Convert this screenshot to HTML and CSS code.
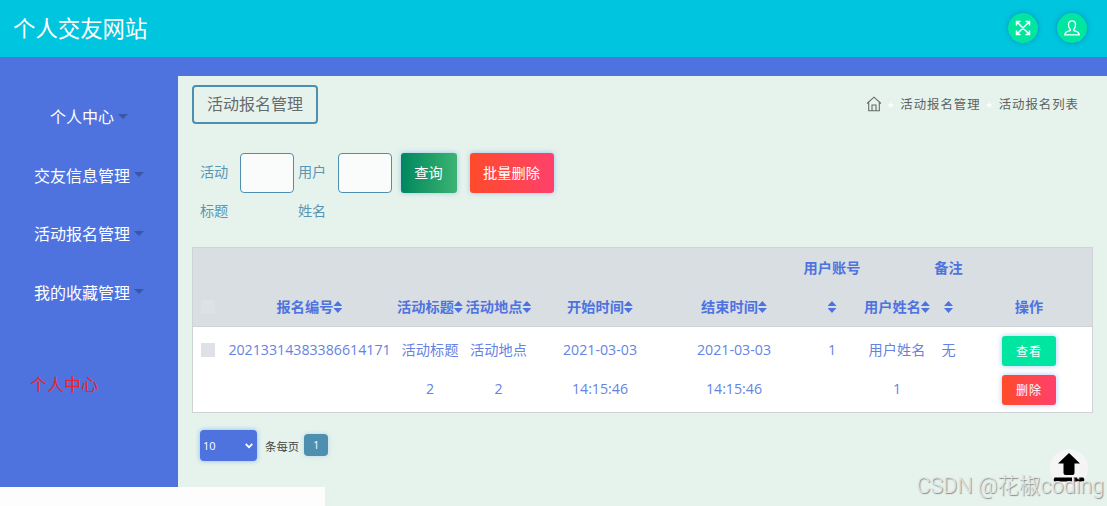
FILE: index.html
```
<!DOCTYPE html>
<html lang="zh-CN">
<head>
  <meta charset="UTF-8">
  <meta name="viewport" content="width=device-width, initial-scale=1.0">
  <title>个人交友网站</title>
  <link rel="stylesheet" href="styles.css">
</head>
<body>
  <header class="header">
    <h1 class="logo">个人交友网站</h1>
    <div class="header-btns">
      <a class="round-btn">
        <svg width="16" height="16" viewBox="0 0 16 16" fill="none" stroke="#fff" stroke-width="1.5">
          <path d="M1.5 5.5v-4h4M10.5 1.5h4v4M14.5 10.5v4h-4M5.5 14.5h-4v-4M2 2l12 12M14 2L2 14"/>
        </svg>
      </a>
      <a class="round-btn">
        <svg width="16" height="16" viewBox="0 0 16 16" fill="none" stroke="#fff" stroke-width="1.3">
          <path d="M6.3 9.600C5 8.200 4.500 6.500 4.500 4.500C4.500 2.200 6 .8 8 .8s3.500 1.400 3.500 3.700c0 2-.5 3.700-1.800 5.100v1c2 .7 5.500 1 5.500 4.300H.8c0-3.300 3.500-3.600 5.500-4.300z"/>
        </svg>
      </a>
    </div>
  </header>

  <div class="wrapper">
    <nav class="sidebar">
      <ul class="menu">
        <li><a>个人中心<i class="caret"></i></a></li>
        <li><a>交友信息管理<i class="caret"></i></a></li>
        <li><a>活动报名管理<i class="caret"></i></a></li>
        <li><a>我的收藏管理<i class="caret"></i></a></li>
      </ul>
      <a class="menu-link">个人中心</a>
    </nav>

    <main class="content">
      <div class="title-row">
        <h2 class="page-title">活动报名管理</h2>
        <div class="breadcrumb">
          <svg width="16" height="16" viewBox="0 0 16 16" fill="none" stroke="#666b6b" stroke-width="1.1">
            <path d="M1 7.500L8 1.200l7 6.300M2.700 6.200v8.600h10.600V6.200M6 14.800V9h4v5.800"/>
          </svg>
          <span class="star">★</span>
          <span>活动报名管理</span>
          <span class="star">★</span>
          <span>活动报名列表</span>
        </div>
      </div>

      <form class="search">
        <label>活动标题</label>
        <input type="text">
        <label>用户姓名</label>
        <input type="text">
        <button type="button" class="btn btn-search">查询</button>
        <button type="button" class="btn btn-danger">批量删除</button>
      </form>

      <table class="table">
        <colgroup>
          <col class="w-check"><col class="w-no"><col class="w-name"><col class="w-place"><col class="w-time">
          <col class="w-time"><col class="w-account"><col class="w-name"><col class="w-remark"><col>
        </colgroup>
        <thead>
          <tr>
            <th><span class="check"></span></th>
            <th>报名编号<i class="sort"></i></th>
            <th>活动标题<i class="sort"></i></th>
            <th>活动地点<i class="sort"></i></th>
            <th>开始时间<i class="sort"></i></th>
            <th>结束时间<i class="sort"></i></th>
            <th>用户账号<br><i class="sort"></i></th>
            <th>用户姓名<i class="sort"></i></th>
            <th>备注<br><i class="sort"></i></th>
            <th>操作</th>
          </tr>
        </thead>
        <tbody>
          <tr>
            <td><span class="check"></span></td>
            <td>20213314383386614171</td>
            <td>活动标题<br>2</td>
            <td>活动地点<br>2</td>
            <td>2021-03-03<br>14:15:46</td>
            <td>2021-03-03<br>14:15:46</td>
            <td>1</td>
            <td>用户姓名<br>1</td>
            <td>无</td>
            <td>
              <div class="actions">
                <button type="button" class="btn btn-sm btn-view">查看</button>
                <button type="button" class="btn btn-sm btn-danger">删除</button>
              </div>
            </td>
          </tr>
        </tbody>
      </table>

      <div class="pager">
        <div class="page-size">
          <span>10</span>
          <svg width="8" height="6" viewBox="0 0 8 6" fill="none" stroke="#fff" stroke-width="1.8"><path d="M.8 1L4 4.300L7.200 1"/></svg>
        </div>
        <span class="per-page">条每页</span>
        <a class="page-no">1</a>
      </div>
    </main>
  </div>

  <div class="status-bar"></div>
  <a class="to-top">
    <svg width="32" height="30" viewBox="0 0 32 30">
      <path d="M16 1L27 11.500H21.500V21q0 2-2 2h-7q-2 0-2-2v-9.500H5z"/>
      <path d="M1.500 25.500h17.500v4H1.500q-1.500-2 0-4zM20.500 25.500H24l1 1.500 1.500-1.500h4q1.500 2 0 4h-10z"/>
    </svg>
  </a>
  <div class="watermark">CSDN @花椒coding</div>
</body>
</html>
```
FILE: styles.css
```
* {
  box-sizing: border-box;
}

body {
  margin: 0;
  height: 506px;
  overflow: hidden;
  background: #4e73df;
  font-family: "Open Sans", "Noto Sans CJK SC", sans-serif;
  font-size: 14.2px;
  font-weight: 400;
}

.header {
  display: flex;
  align-items: center;
  justify-content: space-between;
  height: 57px;
  padding: 0 20px 2px 13px;
  background: #00c5de;
}

.logo {
  margin: 0;
  color: #fff;
  font-size: 22.4px;
  font-weight: 400;
}

.header-btns {
  display: flex;
  gap: 19px;
}

.round-btn {
  display: flex;
  align-items: center;
  justify-content: center;
  width: 30px;
  height: 30px;
  border-radius: 50%;
  background: #00e5a0;
  box-shadow: 0 0 5px rgba(0, 70, 140, .4);
}

.wrapper {
  display: flex;
  height: 449px;
  padding-top: 19px;
}

.sidebar {
  width: 178px;
  flex: none;
}

.menu {
  margin: 0;
  padding: 11px 0 0;
  list-style: none;
}

.menu li {
  display: flex;
  align-items: center;
  justify-content: center;
  height: 58.5px;
}

.menu a {
  display: flex;
  align-items: center;
  color: #fff;
  font-size: 16px;
}

.caret {
  margin-left: 4px;
  border: 5px solid transparent;
  border-top-color: #3a56a8;
  border-bottom: 0;
}

.menu-link {
  display: block;
  margin: 51px 0 0 30px;
  color: #e8252f;
  font-size: 17px;
  line-height: 26px;
}

.content {
  flex: 1;
  padding: 9px 14px 0;
  background: #e6f3ec;
}

.title-row {
  display: flex;
  align-items: flex-start;
  justify-content: space-between;
}

.page-title {
  width: 126px;
  height: 39px;
  margin: 0;
  border: 2px solid #4e8fb0;
  border-radius: 4px;
  color: #666b6b;
  font-size: 16px;
  font-weight: 400;
  line-height: 34px;
  text-align: center;
}

.breadcrumb {
  display: flex;
  align-items: center;
  padding: 10px 14px 0 0;
  color: #5c6161;
  font-size: 12.4px;
  letter-spacing: 1px;
  line-height: 20px;
}

.breadcrumb svg {
  margin-top: -3px;
}

.star {
  width: 18px;
  color: #fff;
  font-size: 7px;
  text-align: center;
}

.search {
  display: flex;
  align-items: flex-start;
  height: 123px;
  padding: 29px 0 0 8px;
}

.search label {
  width: 30px;
  margin: -1px 10px 0 0;
  color: #5a96b4;
  line-height: 39px;
  letter-spacing: -.3px;
}

.search input {
  width: 54px;
  height: 40px;
  margin: 0 4px 0 0;
  border: 1px solid #4e8fb0;
  border-radius: 4px;
  background: #fafcfb;
}

.btn {
  height: 40px;
  padding: 0 1px 2px 0;
  border: 0;
  border-radius: 3px;
  color: #fff;
  font-family: inherit;
  font-size: 14.2px;
  box-shadow: 0 0 5px rgba(78, 145, 240, .5);
}

.btn-search {
  width: 56px;
  margin: 0 13px 0 5px;
  background: linear-gradient(to right, #00875f, #3cb371);
}

.search .btn-danger {
  width: 84px;
}

.btn-danger {
  background: linear-gradient(to right, #ff4b2b, #ff416c);
}

.btn-view {
  background: #00e5a0;
}

.btn-sm {
  width: 54px;
  height: 30px;
  padding: 0;
  font-size: 12px;
  letter-spacing: 1px;
}

.table {
  width: 901px;
  table-layout: fixed;
  border-spacing: 0;
  border: 1px solid #ced3d6;
  background: #fff;
  color: #6683e3;
  line-height: 39px;
  text-align: center;
}

.table th {
  height: 78px;
  padding: 0;
  border-bottom: 1px solid #ced3d6;
  background: #d9dee2;
  color: #4e73df;
  font-weight: 600;
  vertical-align: bottom;
  white-space: nowrap;
}

.table td {
  height: 85px;
  padding: 3px 0 0;
  vertical-align: top;
  white-space: nowrap;
}

.w-check { width: 30px; }
.w-no { width: 173px; }
.w-name { width: 68px; }
.w-place { width: 69px; }
.w-time { width: 134px; }
.w-account { width: 62px; }
.w-remark { width: 35px; }

.check {
  display: inline-block;
  width: 14px;
  height: 14px;
  background: #dee2e6;
  vertical-align: -2px;
}

.sort {
  display: inline-block;
  width: 9px;
  height: 12px;
  background: #4e73df;
  clip-path: polygon(50% 0, 100% 42%, 0 42%, 0 58%, 100% 58%, 50% 100%, 0 58%, 0 42%);
  vertical-align: -1px;
}

.actions {
  display: flex;
  flex-direction: column;
  align-items: center;
  gap: 9px;
  padding-top: 6px;
}

.pager {
  display: flex;
  align-items: center;
  padding: 17px 0 0 8px;
}

.page-size {
  display: flex;
  align-items: center;
  justify-content: space-between;
  width: 57px;
  height: 31px;
  padding: 0 4px 0 3px;
  border-radius: 4px;
  background: #4e73df;
  color: #fff;
  font-size: 11px;
  box-shadow: 0 0 5px rgba(78, 145, 240, .6);
}

.per-page {
  margin: 0 5px 0 8px;
  color: #444;
  font-size: 11.4px;
}

.page-no {
  width: 24px;
  height: 22px;
  margin-top: -1px;
  border-radius: 4px;
  background: #4e8fb0;
  color: #fff;
  font-size: 10.5px;
  line-height: 22px;
  text-align: center;
  box-shadow: 0 0 5px rgba(78, 145, 240, .3);
}

.status-bar {
  position: absolute;
  left: 0;
  bottom: 0;
  width: 325px;
  height: 19px;
  background: #fdfdfd;
}

.to-top {
  position: absolute;
  left: 1050px;
  top: 449px;
  display: flex;
  justify-content: center;
  width: 38px;
  height: 38px;
  padding-top: 3px;
  border-radius: 50%;
  background: #f5f5f5;
}

.watermark {
  position: absolute;
  right: 3px;
  bottom: 5px;
  color: #e2e5e4;
  font-family: Roboto, "Noto Sans CJK SC", sans-serif;
  font-size: 21.5px;
  font-weight: 300;
  line-height: 30px;
  text-shadow: 1px 1px 1px #888;
  white-space: nowrap;
}
```
